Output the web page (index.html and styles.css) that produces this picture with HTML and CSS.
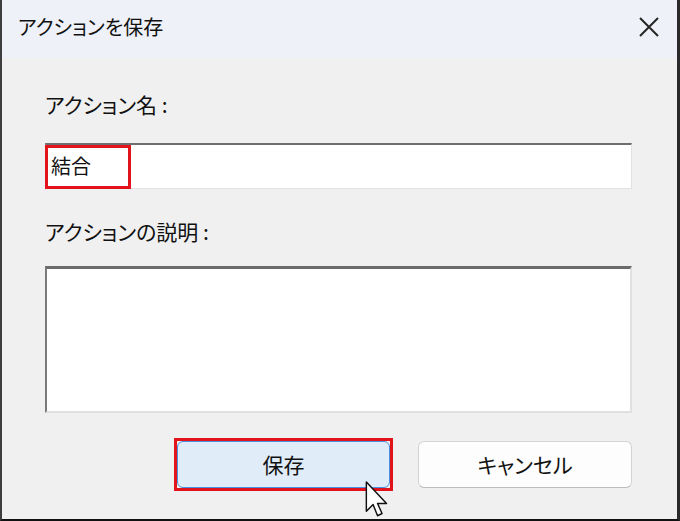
FILE: index.html
```html
<!DOCTYPE html>
<html lang="ja">
<head>
    <meta charset="utf-8">
    <title>アクションを保存</title>
    <link rel="stylesheet" href="styles.css">
</head>
<body>
    <div class="dialog">
        <!-- Title bar -->
        <div class="titlebar">
            <span class="title">アクションを保存</span>
            <span class="close">
                <svg width="22" height="22" viewBox="0 0 22 22">
                    <path d="M2 2 L20 20 M20 2 L2 20" stroke="#262626" stroke-width="2" fill="none"/>
                </svg>
            </span>
        </div>

        <!-- Form -->
        <div class="content">
            <div class="field-label">アクション名 :</div>
            <div class="textbox">
                <span class="value">結合</span>
                <span class="mark"></span>
            </div>

            <div class="field-label second">アクションの説明 :</div>
            <div class="textarea"></div>

            <div class="actions">
                <button class="btn btn-primary">保存</button>
                <button class="btn">キャンセル</button>
            </div>
        </div>

        <svg class="cursor" width="24" height="37" viewBox="0 0 21 33">
            <path d="M1 1 V27 L7 21 L11 31 L15 29 L11 20 H19 Z" fill="#fff" stroke="#111" stroke-width="1.3" stroke-linejoin="round"/>
        </svg>
    </div>
</body>
</html>
```

FILE: styles.css
```css
body {
    margin: 0;
    background: #f0f0f0;
    font-family: "Noto Sans CJK JP", "Noto Sans", sans-serif;
    font-feature-settings: "palt";
    color: #111;
}
.dialog {
    position: relative;
    width: 680px;
    height: 521px;
    box-sizing: border-box;
    background: #f0f0f0;
    border-left: 2px solid #3e3e3e;
    border-right: 3px solid #2a2a2a;
    border-bottom: 2px solid #111;
    overflow: hidden;
}
.titlebar {
    height: 58px;
    background: #eef2f8;
    display: flex;
    align-items: center;
    justify-content: space-between;
    padding: 0 18px 4px 16px;
    box-sizing: border-box;
}
.title {
    font-size: 20px;
    line-height: 24px;
}
.close {
    display: flex;
    margin-right: -1px;
}
.content {
    padding: 34px 45px 0 43px;
}
.field-label {
    font-size: 21px;
    line-height: 24px;
}
.field-label.second {
    margin-top: 30px;
}
.textbox {
    position: relative;
    margin-top: 27px;
    height: 46px;
    box-sizing: border-box;
    background: #fff;
    border-top: 2px solid #6e6e6e;
    border-left: 1px solid #a0a0a0;
    border-right: 1px solid #e1e1e1;
    border-bottom: 1px solid #e1e1e1;
    display: flex;
    align-items: center;
    padding-left: 5px;
}
.value {
    font-size: 20px;
    line-height: 24px;
    margin-top: -2px;
}
.mark {
    position: absolute;
    top: 0;
    left: -1px;
    bottom: -1px;
    width: 86px;
    box-sizing: border-box;
    border: 3px solid #e3131b;
}
.textarea {
    margin-top: 23px;
    height: 147px;
    box-sizing: border-box;
    background: #fff;
    border-top: 3px solid #6b6b6b;
    border-left: 2px solid #7a7a7a;
    border-right: 2px solid #e0e0e0;
    border-bottom: 2px solid #e0e0e0;
}
.actions {
    margin-top: 28px;
    display: flex;
    justify-content: flex-end;
    gap: 28px;
}
.btn {
    width: 214px;
    height: 47px;
    font-family: inherit;
    font-feature-settings: "palt";
    font-size: 21px;
    color: #111;
    background: #fdfdfd;
    border: 1px solid #d3d3d3;
    border-bottom-color: #bdbdbd;
    border-radius: 6px;
    padding: 0 0 2px;
}
.btn-primary {
    position: relative;
    width: 213px;
    background: #e0ecf8;
    border-color: #4a90e2;
}
/* square red frame drawn round the save button */
.btn-primary::after {
    content: "";
    position: absolute;
    top: -4px;
    left: -4px;
    right: -4px;
    bottom: -4px;
    border: 3px solid #e3131b;
}
.cursor {
    position: absolute;
    left: 363px;
    top: 481px;
}
```
